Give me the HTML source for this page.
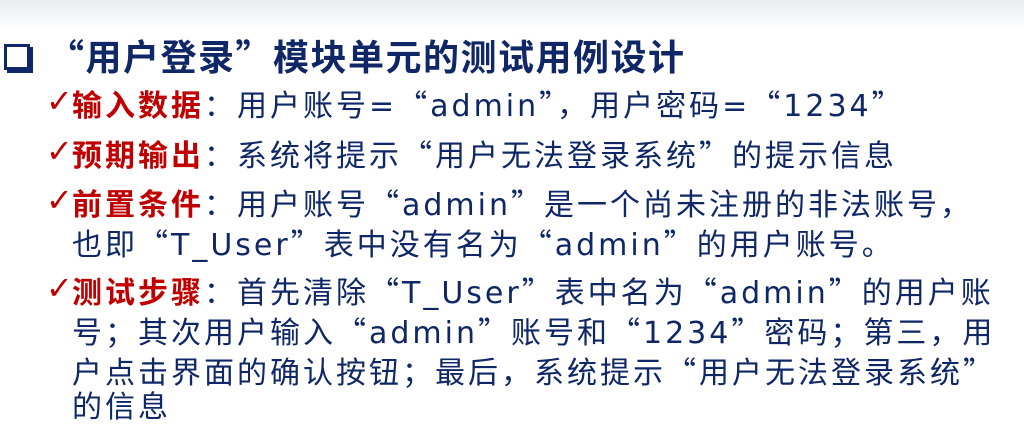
<!DOCTYPE html>
<html><head><meta charset="utf-8"><style>
body{margin:0;width:1024px;height:443px;overflow:hidden;background:#fff;position:relative;font-family:"DejaVu Sans","Noto Sans CJK SC",sans-serif;color:#0f2766}
.bg{position:absolute;left:0;top:0;width:1024px;height:30px;background:linear-gradient(#e9ebef,#fff)}
.l{position:absolute;white-space:nowrap;font-size:30px;line-height:40px;left:72px;letter-spacing:3px}
.q{font-family:"Noto Sans CJK SC",sans-serif}
.r{color:#c00000;font-weight:bold;font-family:"Noto Sans CJK SC",sans-serif}
.ck{position:absolute;left:-26px;top:-2px;color:#c00000;font-size:32px;font-weight:bold}
.t{position:absolute;left:48px;top:33px;font-size:36px;font-weight:bold;line-height:44px;white-space:nowrap;color:#0f2766;letter-spacing:1.5px;font-family:"Noto Sans CJK SC",sans-serif}
.box{position:absolute;left:4px;top:44px;width:20px;height:20px;border:3px solid #0f2766;box-shadow:3px 3px 0 #0f2766}
</style></head><body>
<div class="bg"></div>
<div class="box"></div>
<div class="t">“用户登录”模块单元的测试用例设计</div>
<div class="l" style="top:83px"><span class="ck">✓</span><span class="r">输入数据</span><span class="q">：</span>用户账号=<span class="q">“</span>admin<span class="q">”，</span>用户密码=<span class="q">“</span>1234<span class="q">”</span></div>
<div class="l" style="top:133px"><span class="ck">✓</span><span class="r">预期输出</span><span class="q">：</span>系统将提示<span class="q">“</span>用户无法登录系统<span class="q">”</span>的提示信息</div>
<div class="l" style="top:182px"><span class="ck">✓</span><span class="r">前置条件</span><span class="q">：</span>用户账号<span class="q">“</span>admin<span class="q">”</span>是一个尚未注册的非法账号<span class="q">，</span></div>
<div class="l" style="top:222px">也即<span class="q">“</span>T_User<span class="q">”</span>表中没有名为<span class="q">“</span>admin<span class="q">”</span>的用户账号。</div>
<div class="l" style="top:270px"><span class="ck">✓</span><span class="r">测试步骤</span><span class="q">：</span>首先清除<span class="q">“</span>T_User<span class="q">”</span>表中名为<span class="q">“</span>admin<span class="q">”</span>的用户账</div>
<div class="l" style="top:310px">号<span class="q">；</span>其次用户输入<span class="q">“</span>admin<span class="q">”</span>账号和<span class="q">“</span>1234<span class="q">”</span>密码<span class="q">；</span>第三<span class="q">，</span>用</div>
<div class="l" style="top:350px">户点击界面的确认按钮<span class="q">；</span>最后<span class="q">，</span>系统提示<span class="q">“</span>用户无法登录系统<span class="q">”</span></div>
<div class="l" style="top:388px">的信息</div>
</body></html>
